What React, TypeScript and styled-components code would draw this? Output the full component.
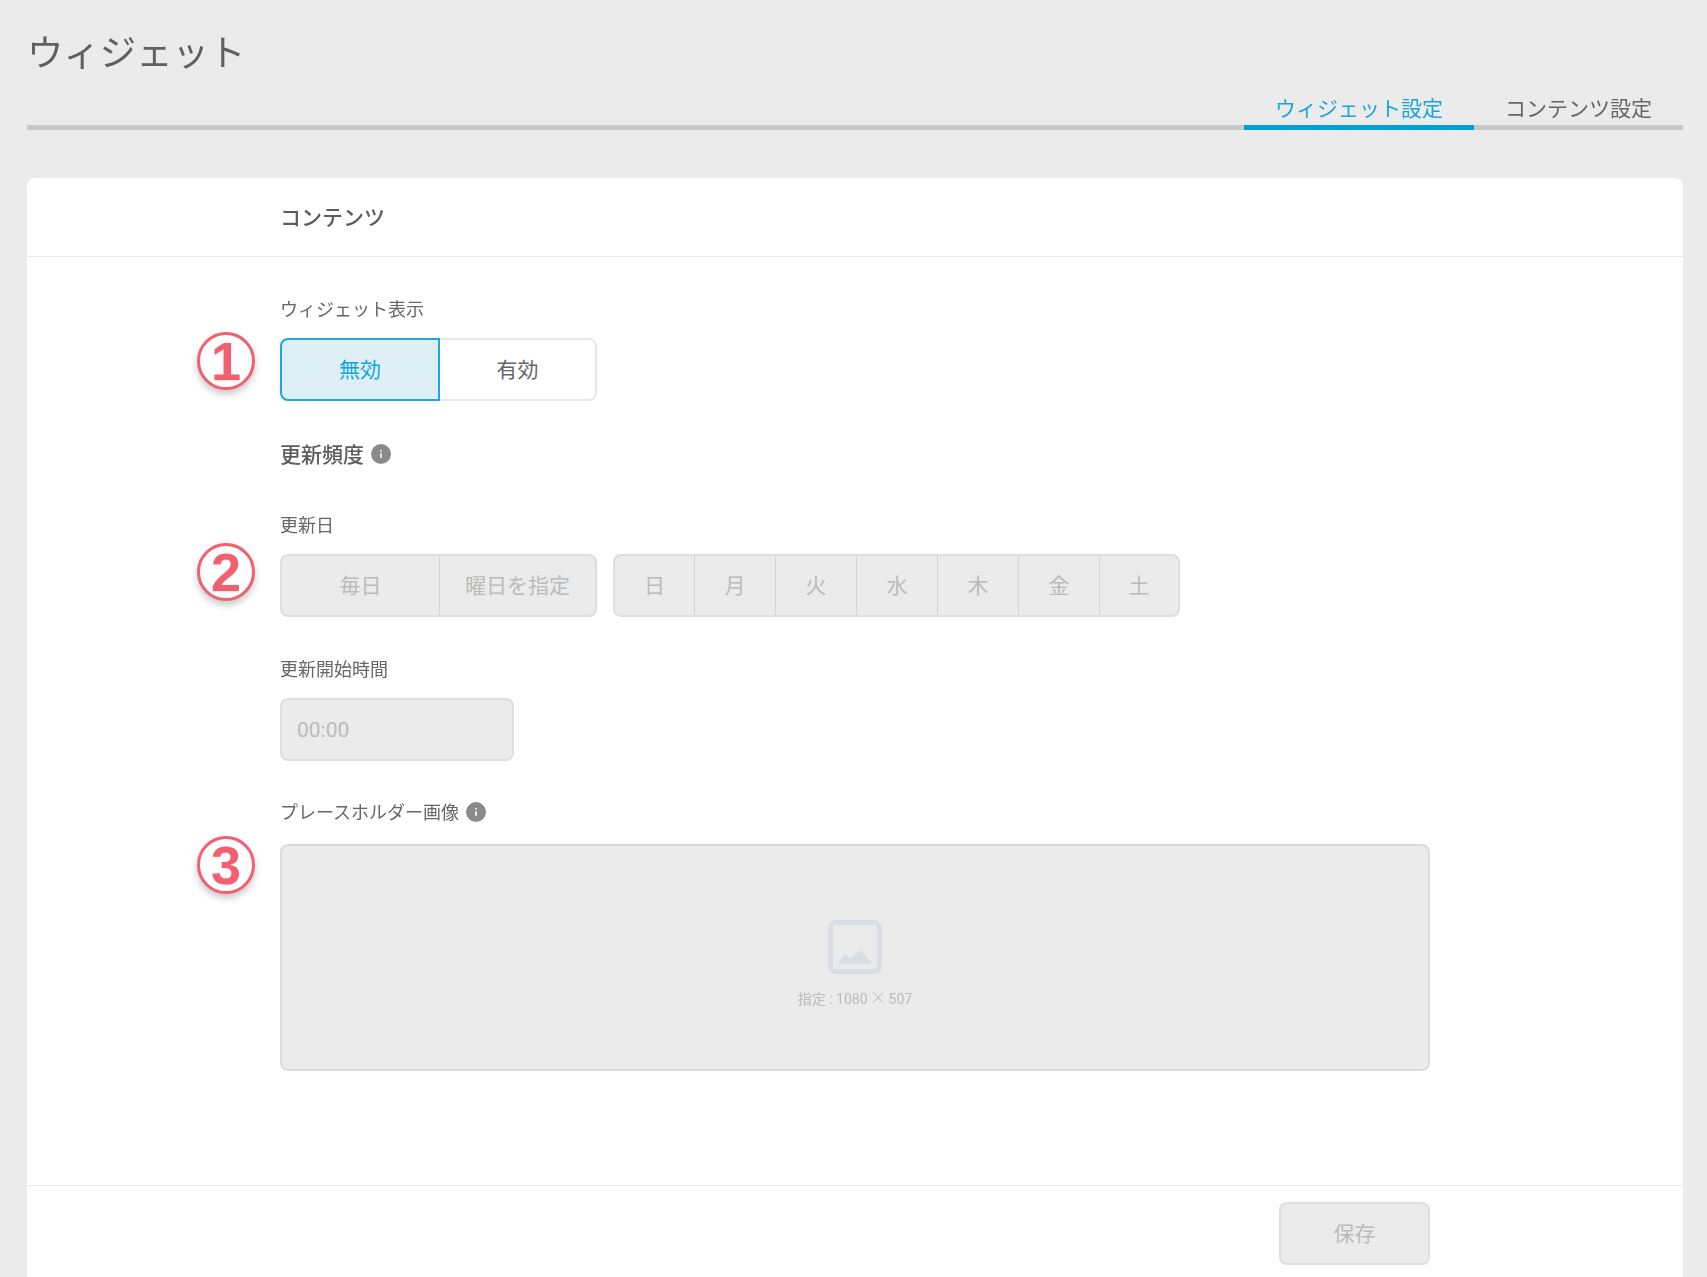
import React from "react";
import styled, { createGlobalStyle } from "styled-components";

const Global = createGlobalStyle`
  html, body { margin: 0; padding: 0; background: #ebebeb; }
  body { font-family: Roboto, "Noto Sans CJK JP", "Noto Sans", sans-serif; color: #666; }
  * { box-sizing: border-box; }
`;

const Page = styled.div`
  display: flex;
  flex-direction: column;
  height: 1277px;
  overflow: hidden;
  padding: 0 24px 0 27px;
  filter: blur(0.45px);
`;

const Header = styled.header`
  display: flex;
  flex-direction: column;
`;

const Title = styled.h1`
  margin: 28px 0 0;
  font-size: 36.4px;
  line-height: 52px;
  font-weight: 400;
  color: #606060;
`;

const Tabs = styled.nav`
  display: flex;
  justify-content: flex-end;
  height: 50px;
  border-bottom: 5px solid #c8c8c8;
`;

const Tab = styled.div<{ $active?: boolean }>`
  height: 50px;
  padding: 14px 31px 0;
  font-size: 21px;
  line-height: 30px;
  color: ${(p) => (p.$active ? "#1ba4d8" : "#666")};
  border-bottom: 5px solid ${(p) => (p.$active ? "#00a0dc" : "transparent")};
`;

const Card = styled.main`
  flex: 1;
  display: flex;
  flex-direction: column;
  margin-top: 48px;
  background: #fff;
  border-radius: 8px 8px 0 0;
`;

const CardHead = styled.h2`
  height: 79px;
  margin: 0;
  padding: 25px 0 0 253px;
  font-size: 21px;
  line-height: 30px;
  font-weight: 500;
  color: #5c5c5c;
  border-bottom: 1px solid #e8e8e8;
`;

const CardBody = styled.div`
  flex: 1;
  padding: 40px 0 0 253px;
`;

const Label = styled.div<{ $top?: number }>`
  display: flex;
  align-items: center;
  gap: 7px;
  height: 26px;
  margin-top: ${(p) => p.$top ?? 0}px;
  font-size: 18px;
  line-height: 26px;
  color: #666;
`;

const SectionTitle = styled.div`
  display: flex;
  align-items: center;
  gap: 7px;
  height: 30px;
  margin-top: 39px;
  font-size: 21px;
  line-height: 30px;
  font-weight: 500;
  color: #5c5c5c;
`;

const ControlRow = styled.div<{ $top: number }>`
  position: relative;
  display: flex;
  gap: 16px;
  margin-top: ${(p) => p.$top}px;
`;

const Badge = styled.div<{ $top: number }>`
  position: absolute;
  left: -83px;
  top: ${(p) => p.$top}px;
  display: flex;
  align-items: center;
  justify-content: center;
  width: 58px;
  height: 58px;
  border: 3px solid #f0606f;
  border-radius: 50%;
  background: #fff;
  box-shadow: 0 4px 7px rgba(0, 0, 0, 0.22);
  font-family: "Liberation Sans", Arial, sans-serif;
  font-size: 54px;
  line-height: 1;
  font-weight: 700;
  color: #f0606f;
  text-shadow: 0 1px 2px rgba(0, 0, 0, 0.12);
`;

const Segments = styled.div<{ $disabled?: boolean }>`
  display: flex;
  height: 63px;
  border-radius: 8px;
  border: 2px solid ${(p) => (p.$disabled ? "#dedede" : "#e4e8ed")};
  background: ${(p) => (p.$disabled ? "#ebebeb" : "#fff")};
`;

const Segment = styled.div<{ $width: number; $disabled?: boolean; $first?: boolean }>`
  display: flex;
  align-items: center;
  justify-content: center;
  width: ${(p) => p.$width}px;
  padding-bottom: 4px;
  font-size: 21px;
  color: ${(p) => (p.$disabled ? "#bbb" : "#666")};
  border-left: ${(p) => (p.$first ? "0" : "1px solid #d4d4d4")};
`;

const ActiveSegment = styled(Segment)`
  margin: -2px 0 -2px -2px;
  width: ${(p) => p.$width + 2}px;
  border: 2px solid #1fa8de;
  border-radius: 8px 0 0 8px;
  background: #dfeff6;
  color: #12a5dc;
`;

const TimeField = styled.div`
  display: flex;
  align-items: center;
  width: 234px;
  height: 63px;
  padding: 0 0 0 15px;
  border: 2px solid #dedede;
  border-radius: 8px;
  background: #ebebeb;
  font-size: 21px;
  color: #bbb;
`;

const Dropzone = styled.div`
  display: flex;
  flex-direction: column;
  align-items: center;
  width: 1150px;
  height: 227px;
  padding-top: 74px;
  border: 2px solid #dcdcdc;
  border-radius: 8px;
  background: #ebebeb;
`;

const DropHint = styled.div`
  margin-top: 13px;
  font-size: 14px;
  line-height: 20px;
  color: #bbb;
`;

const Times = styled.span`
  margin: 0 2px;
  font-family: "Noto Sans CJK JP", sans-serif;
  font-size: 17px;
  font-weight: 300;
`;

const CardFoot = styled.footer`
  display: flex;
  justify-content: flex-end;
  height: 92px;
  padding: 16px 253px 0 0;
  border-top: 1px solid #e8e8e8;
`;

const SaveButton = styled.div`
  display: flex;
  align-items: center;
  justify-content: center;
  width: 151px;
  height: 63px;
  padding-bottom: 4px;
  border: 2px solid #dedede;
  border-radius: 8px;
  background: #ebebeb;
  font-size: 21px;
  color: #bbb;
`;

const InfoSvg = styled.svg`
  margin-bottom: 3px;
`;

const InfoIcon = () => (
  <InfoSvg width="20" height="20" viewBox="0 0 20 20" aria-hidden="true">
    <circle cx="10" cy="10" r="10" fill="#8a8a8a" />
    <rect x="9" y="9" width="2" height="5" rx="0.4" fill="#e4e4e4" />
    <circle cx="10" cy="6.8" r="1.1" fill="#e4e4e4" />
  </InfoSvg>
);

const ImageIcon = () => (
  <svg width="54" height="54" viewBox="0 0 54 54" aria-hidden="true">
    <rect x="2.5" y="2.5" width="49" height="49" rx="5" fill="none" stroke="#d9dee5" strokeWidth="5" />
    <path d="M11 43 L17 35 L22 40 L33 31 L43 43 Z" fill="#d9dee5" stroke="#d9dee5" strokeWidth="1.5" strokeLinejoin="round" />
  </svg>
);

const days = ["日", "月", "火", "水", "木", "金", "土"];
const dayWidth = (i: number) => (i === 0 ? 79 : i === 6 ? 79 : 81);

export default function App() {
  return (
    <Page>
      <Global />
      <Header>
        <Title>ウィジェット</Title>
        <Tabs>
          <Tab $active>ウィジェット設定</Tab>
          <Tab>コンテンツ設定</Tab>
        </Tabs>
      </Header>
      <Card>
        <CardHead>コンテンツ</CardHead>
        <CardBody>
          <Label>ウィジェット表示</Label>
          <ControlRow $top={15}>
            <Badge $top={-6}>1</Badge>
            <Segments>
              <ActiveSegment $width={158} $first>無効</ActiveSegment>
              <Segment $width={155} $first>有効</Segment>
            </Segments>
          </ControlRow>
          <SectionTitle>
            更新頻度 <InfoIcon />
          </SectionTitle>
          <Label $top={43}>更新日</Label>
          <ControlRow $top={15}>
            <Badge $top={-11}>2</Badge>
            <Segments $disabled>
              <Segment $width={157} $disabled $first>毎日</Segment>
              <Segment $width={156} $disabled>曜日を指定</Segment>
            </Segments>
            <Segments $disabled>
              {days.map((d, i) => (
                <Segment key={d} $width={dayWidth(i)} $disabled $first={i === 0}>
                  {d}
                </Segment>
              ))}
            </Segments>
          </ControlRow>
          <Label $top={40}>更新開始時間</Label>
          <ControlRow $top={15}>
            <TimeField>00:00</TimeField>
          </ControlRow>
          <Label $top={39}>
            プレースホルダー画像 <InfoIcon />
          </Label>
          <ControlRow $top={18}>
            <Badge $top={-8}>3</Badge>
            <Dropzone>
              <ImageIcon />
              <DropHint>指定 : 1080<Times>×</Times>507</DropHint>
            </Dropzone>
          </ControlRow>
        </CardBody>
        <CardFoot>
          <SaveButton>保存</SaveButton>
        </CardFoot>
      </Card>
    </Page>
  );
}
